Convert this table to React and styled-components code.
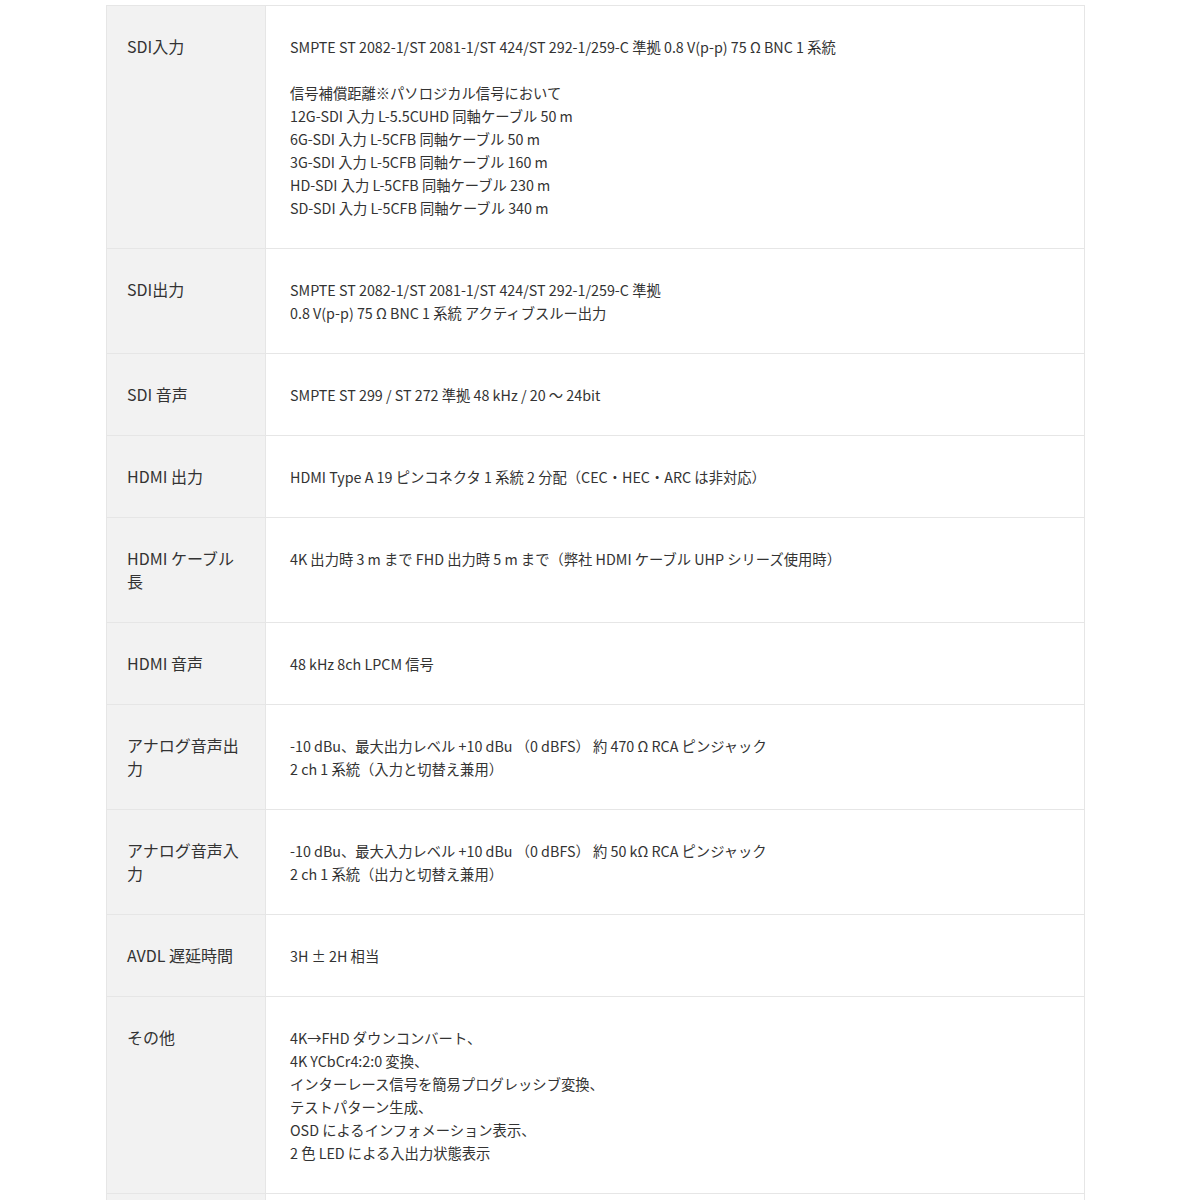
import React from 'react';
import styled, { createGlobalStyle } from 'styled-components';

const Global = createGlobalStyle`
  body {
    margin: 0;
    background: #fff;
    font-family: "Noto Sans CJK JP", "Noto Sans", sans-serif;
    color: #333;
  }
`;

const specs = [
  {
    label: 'SDI入力',
    lines: [
      'SMPTE ST 2082-1/ST 2081-1/ST 424/ST 292-1/259-C 準拠 0.8 V(p-p) 75 Ω BNC 1 系統',
      '',
      '信号補償距離※パソロジカル信号において',
      '12G-SDI 入力 L-5.5CUHD 同軸ケーブル 50 m',
      '6G-SDI 入力 L-5CFB 同軸ケーブル 50 m',
      '3G-SDI 入力 L-5CFB 同軸ケーブル 160 m',
      'HD-SDI 入力 L-5CFB 同軸ケーブル 230 m',
      'SD-SDI 入力 L-5CFB 同軸ケーブル 340 m',
    ],
  },
  {
    label: 'SDI出力',
    lines: [
      'SMPTE ST 2082-1/ST 2081-1/ST 424/ST 292-1/259-C 準拠',
      '0.8 V(p-p) 75 Ω BNC 1 系統 アクティブスルー出力',
    ],
  },
  { label: 'SDI 音声', lines: ['SMPTE ST 299 / ST 272 準拠 48 kHz / 20 〜 24bit'] },
  { label: 'HDMI 出力', lines: ['HDMI Type A 19 ピンコネクタ 1 系統 2 分配（CEC・HEC・ARC は非対応）'] },
  {
    label: 'HDMI ケーブル長',
    lines: ['4K 出力時 3 m まで FHD 出力時 5 m まで（弊社 HDMI ケーブル UHP シリーズ使用時）'],
  },
  { label: 'HDMI 音声', lines: ['48 kHz 8ch LPCM 信号'] },
  {
    label: 'アナログ音声出力',
    lines: [
      '-10 dBu、最大出力レベル +10 dBu （0 dBFS） 約 470 Ω RCA ピンジャック',
      '2 ch 1 系統（入力と切替え兼用）',
    ],
  },
  {
    label: 'アナログ音声入力',
    lines: [
      '-10 dBu、最大入力レベル +10 dBu （0 dBFS） 約 50 kΩ RCA ピンジャック',
      '2 ch 1 系統（出力と切替え兼用）',
    ],
  },
  { label: 'AVDL 遅延時間', lines: ['3H ± 2H 相当'] },
  {
    label: 'その他',
    lines: [
      '4K→FHD ダウンコンバート、',
      '4K YCbCr4:2:0 変換、',
      'インターレース信号を簡易プログレッシブ変換、',
      'テストパターン生成、',
      'OSD によるインフォメーション表示、',
      '2 色 LED による入出力状態表示',
    ],
  },
  { label: '電源', lines: ['DC 12 V'] },
];

const Page = styled.div`
  padding: 5px 0 0 106px;
`;

const Table = styled.table`
  width: 979px;
  border-collapse: collapse;
  border: 1px solid #e6e6e6;
`;

const Row = styled.tr`
  border-bottom: 1px solid #e6e6e6;
`;

const Label = styled.th`
  width: 118px;
  padding: 29px 20px;
  background: #f2f2f2;
  border-right: 1px solid #e6e6e6;
  text-align: left;
  vertical-align: top;
  font-weight: 400;
  font-size: 16px;
  line-height: 23px;
  color: #333;
`;

const Value = styled.td`
  padding: 29px 24px;
  vertical-align: top;
  font-size: 14.3px;
  line-height: 23px;
  color: #333;
`;

const Line = styled.div`
  min-height: 23px;
`;

export default function App() {
  return (
    <Page>
      <Global />
      <Table>
        <tbody>
          {specs.map((s) => (
            <Row key={s.label}>
              <Label>{s.label}</Label>
              <Value>
                {s.lines.map((l, i) => (
                  <Line key={i}>{l}</Line>
                ))}
              </Value>
            </Row>
          ))}
        </tbody>
      </Table>
    </Page>
  );
}
